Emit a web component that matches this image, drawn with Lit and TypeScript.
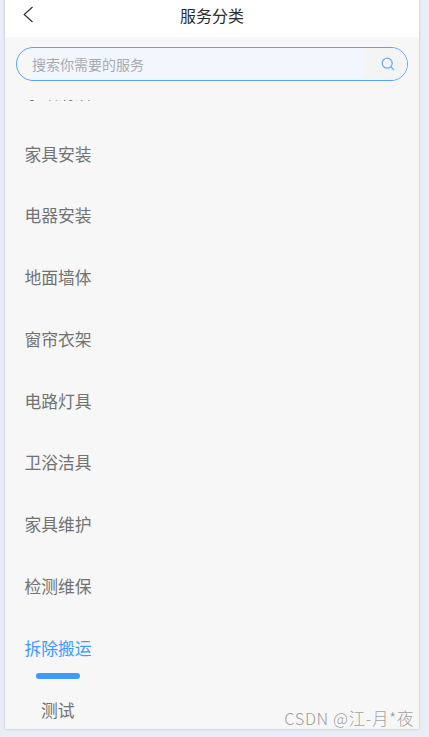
import { LitElement, html, css } from "lit";
import { customElement } from "lit/decorators.js";

const ITEMS = ["家具安装", "电器安装", "地面墙体", "窗帘衣架", "电路灯具", "卫浴洁具", "家具维护", "检测维保"];

@customElement("app-root")
export class AppRoot extends LitElement {
  static styles = css`
    :host {
      display: block;
      position: relative;
      height: 737px;
      overflow: hidden;
      background: #e9eef6;
      font-family: "Liberation Sans", "Noto Sans CJK SC", sans-serif;
    }
    .phone {
      width: 414px;
      height: 729px;
      margin-left: 5px;
      display: flex;
      flex-direction: column;
      background: #f7f7f7;
      box-shadow: 0 0 2px rgba(120, 130, 150, 0.55);
      overflow: hidden;
    }
    .header {
      flex: none;
      height: 37px;
      background: #fff;
      display: flex;
      align-items: center;
      justify-content: center;
      position: relative;
      font-size: 16px;
      color: #2a2a2a;
      padding: 0 0 8px 0;
      box-sizing: border-box;
    }
    .back {
      position: absolute;
      left: 18px;
      top: 5px;
      width: 12px;
      height: 19px;
    }
    .search-wrap {
      flex: none;
      height: 63px;
      padding: 10px 11px 0;
      box-sizing: border-box;
    }
    .search {
      height: 34px;
      box-sizing: border-box;
      border: 1px solid #58a4ff;
      border-radius: 17px;
      display: flex;
      align-items: center;
      overflow: hidden;
    }
    .ph {
      flex: 1;
      height: 100%;
      margin-left: 15px;
      display: flex;
      align-items: center;
      background: #f2f7fe;
      font-size: 14px;
      color: #a8aaae;
    }
    .btn {
      width: 44px;
      height: 100%;
      background: #f3f4f6;
      display: flex;
      align-items: center;
      justify-content: center;
      padding-left: 5px;
      box-sizing: border-box;
    }
    .btn svg {
      width: 14px;
      height: 14px;
    }
    .list {
      flex: 1;
      overflow: hidden;
      min-height: 0;
    }
    .items {
      margin-top: -39px;
      padding-left: 19.5px;
    }
    .item {
      height: 61.75px;
      display: flex;
      align-items: center;
      font-size: 16.8px;
      color: #727272;
    }
    .active {
      color: #3d9bff;
    }
    .bar {
      width: 44px;
      height: 6px;
      border-radius: 3px;
      background: #3d9bff;
      margin: -6px 0 0 11.5px;
    }
    .sub {
      margin-left: 16.5px;
      margin-top: 19px;
      font-size: 16.8px;
      color: #727272;
    }
    .mark {
      position: absolute;
      right: 15px;
      top: 707px;
      font-size: 16.5px;
      letter-spacing: 0.6px;
      color: rgba(120, 120, 120, 0.72);
      font-family: "Noto Sans CJK SC", "Noto Sans", sans-serif;
      font-weight: 300;
      line-height: 22px;
    }
  `;

  render() {
    return html`
      <div class="phone">
        <div class="header">
          <svg class="back" viewBox="0 0 12 19" fill="none" stroke="#333" stroke-width="1.2">
            <path d="M9.5 2 L1.2 9.5 L9.5 17"></path>
          </svg>
          服务分类
        </div>
        <div class="search-wrap">
          <div class="search">
            <div class="ph">搜索你需要的服务</div>
            <div class="btn">
              <svg viewBox="0 0 14 14" fill="none" stroke="#6aaef5" stroke-width="1.3">
                <circle cx="6.2" cy="6.2" r="5"></circle>
                <path d="M10 10 L13 13"></path>
              </svg>
            </div>
          </div>
        </div>
        <div class="list">
          <div class="items">
            <div class="item">家政清洁</div>
            ${ITEMS.map((t) => html`<div class="item">${t}</div>`)}
            <div class="item active">拆除搬运</div>
            <div class="bar"></div>
            <div class="sub">测试</div>
          </div>
        </div>
      </div>
      <div class="mark">CSDN @江-月*夜</div>
    `;
  }
}
